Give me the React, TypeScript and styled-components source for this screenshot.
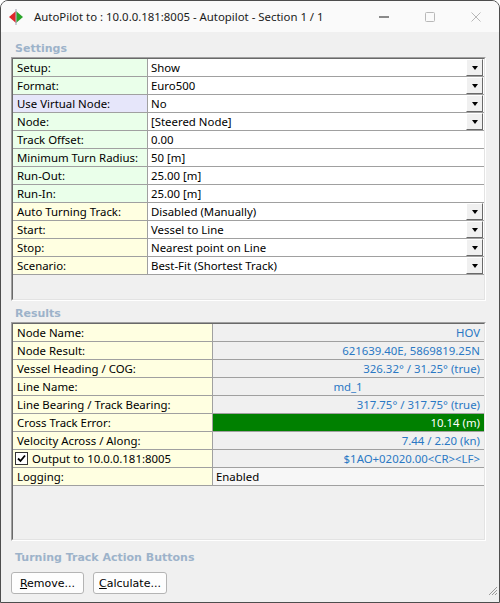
import React from 'react';
import styled, { createGlobalStyle } from 'styled-components';

const GlobalStyle = createGlobalStyle`
  html, body {
    margin: 0;
    padding: 0;
    background: #ffffff;
  }
  * {
    box-sizing: border-box;
  }
`;

const Window = styled.div`
  width: 500px;
  height: 603px;
  border: 1px solid #4d4d4d;
  border-radius: 8px 8px 0 0;
  background: #f0f0f0;
  display: flex;
  flex-direction: column;
  overflow: hidden;
  position: relative;
  font-family: "Noto Sans", "DejaVu Sans", sans-serif;
`;

const TitleBar = styled.div`
  height: 31px;
  background: #fafafa;
  display: flex;
  align-items: center;
  padding-left: 7px;
  flex-shrink: 0;
`;

const TitleText = styled.div`
  font-size: 11.4px;
  color: #1a1a1a;
  margin-left: 10px;
  flex: 1;
  white-space: nowrap;
`;

const WindowButtons = styled.div`
  display: flex;
  align-items: center;
  height: 100%;
`;

const WinButton = styled.div`
  width: 46px;
  height: 100%;
  display: flex;
  align-items: center;
  justify-content: center;
`;

const Body = styled.div`
  flex: 1;
  display: flex;
  flex-direction: column;
  padding: 0 13px 0 10px;
`;

const GroupLabel = styled.div<{ $top: number }>`
  font-family: "DejaVu Sans", "Noto Sans", sans-serif;
  font-weight: bold;
  font-size: 11px;
  color: #9db3ca;
  height: 17px;
  line-height: 17px;
  margin-top: ${p => p.$top}px;
  padding-left: 4px;
`;

const Grid = styled.div<{ $height: number }>`
  height: ${p => p.$height}px;
  border-style: solid;
  border-width: 1px;
  border-color: #a0a0a0 #ffffff #ffffff #a0a0a0;
  display: flex;
  flex-direction: column;
`;

const GridInner = styled.div`
  flex: 1;
  border-style: solid;
  border-width: 1px;
  border-color: #696969 #e3e3e3 #e3e3e3 #696969;
  background: #f0f0f0;
  display: flex;
  flex-direction: column;
`;

const Row = styled.div<{ $labelWidth: number }>`
  display: grid;
  grid-template-columns: ${p => p.$labelWidth}px 1fr;
  height: 18px;
  border-bottom: 1px solid #a0a0a0;
  font-size: 11.4px;
  color: #000;
`;

const LabelCell = styled.div<{ $bg: string }>`
  background: ${p => p.$bg};
  border-right: 1px solid #a0a0a0;
  display: flex;
  align-items: center;
  padding-left: 4px;
  white-space: nowrap;
  overflow: hidden;
`;

const ValueCell = styled.div<{ $bg?: string; $color?: string; $align?: string }>`
  background: ${p => p.$bg || '#ffffff'};
  color: ${p => p.$color || '#000000'};
  display: flex;
  align-items: center;
  justify-content: ${p => p.$align || 'flex-start'};
  padding: 0 4px 0 3px;
  white-space: nowrap;
  position: relative;
`;

const ValueText = styled.span`
  flex: 1;
`;

const DropButton = styled.div`
  width: 17px;
  height: 17px;
  margin-right: -3px;
  background: #f0f0f0;
  border-style: solid;
  border-width: 1px;
  border-color: #ffffff #696969 #696969 #ffffff;
  display: flex;
  align-items: center;
  justify-content: center;
  flex-shrink: 0;
`;

const Arrow = styled.div`
  width: 0;
  height: 0;
  border-left: 3.5px solid transparent;
  border-right: 3.5px solid transparent;
  border-top: 4px solid #000;
`;

const CheckBox = styled.div`
  width: 13px;
  height: 13px;
  border: 1px solid #333;
  background: #fff;
  margin-right: 4px;
  margin-left: -2px;
  display: flex;
  align-items: center;
  justify-content: center;
`;

const ButtonRow = styled.div`
  display: flex;
  gap: 9px;
  margin-top: 6px;
`;

const Button = styled.button`
  height: 22px;
  padding: 0;
  border: 1px solid #b4b4b4;
  border-radius: 3px;
  background: #fdfdfd;
  font-family: "DejaVu Sans", "Noto Sans", sans-serif;
  font-size: 11px;
  color: #000;
  u {
    text-decoration: underline;
  }
`;

const Grip = styled.div`
  position: absolute;
  right: 1px;
  bottom: 1px;
`;

const GREEN = '#eaffea';
const LAVENDER = '#e6e6fa';
const YELLOW = '#ffffe1';
const BLUE = '#2a78c4';

type Setting = { label: string; value: string; bg: string; drop?: boolean };

const settings: Setting[] = [
  { label: 'Setup:', value: 'Show', bg: GREEN, drop: true },
  { label: 'Format:', value: 'Euro500', bg: GREEN, drop: true },
  { label: 'Use Virtual Node:', value: 'No', bg: LAVENDER, drop: true },
  { label: 'Node:', value: '[Steered Node]', bg: GREEN, drop: true },
  { label: 'Track Offset:', value: '0.00', bg: GREEN },
  { label: 'Minimum Turn Radius:', value: '50 [m]', bg: GREEN },
  { label: 'Run-Out:', value: '25.00 [m]', bg: GREEN },
  { label: 'Run-In:', value: '25.00 [m]', bg: GREEN },
  { label: 'Auto Turning Track:', value: 'Disabled (Manually)', bg: YELLOW, drop: true },
  { label: 'Start:', value: 'Vessel to Line', bg: YELLOW, drop: true },
  { label: 'Stop:', value: 'Nearest point on Line', bg: YELLOW, drop: true },
  { label: 'Scenario:', value: 'Best-Fit (Shortest Track)', bg: YELLOW, drop: true },
];

type Result = { label: string; value: string; align?: string; bg?: string; color?: string; check?: boolean };

const results: Result[] = [
  { label: 'Node Name:', value: 'HOV' },
  { label: 'Node Result:', value: '621639.40E, 5869819.25N' },
  { label: 'Vessel Heading / COG:', value: '326.32° / 31.25° (true)' },
  { label: 'Line Name:', value: 'md_1', align: 'center' },
  { label: 'Line Bearing / Track Bearing:', value: '317.75° / 317.75° (true)' },
  { label: 'Cross Track Error:', value: '10.14 (m)', bg: '#008000', color: '#ffffff' },
  { label: 'Velocity Across / Along:', value: '7.44 / 2.20 (kn)' },
  { label: 'Output to 10.0.0.181:8005', value: '$1AO+02020.00<CR><LF>', check: true },
  { label: 'Logging:', value: 'Enabled', align: 'flex-start', bg: '#f7f7f7', color: '#000' },
];

const AppIcon = () => (
  <svg width="16" height="16" viewBox="0 0 16 16">
    <polygon points="1,8 8,2 8,14" fill="#e0262a" />
    <polygon points="15,8 8,2 8,14" fill="#2aa52a" />
    <line x1="8" y1="0" x2="8" y2="16" stroke="#b0b0c0" strokeWidth="1.2" />
  </svg>
);

const App: React.FC = () => {
  return (
    <>
      <GlobalStyle />
      <Window>
        <TitleBar>
          <AppIcon />
          <TitleText>AutoPilot to : 10.0.0.181:8005 - Autopilot - Section 1 / 1</TitleText>
          <WindowButtons>
            <WinButton>
              <svg width="10" height="10" viewBox="0 0 10 10">
                <line x1="0" y1="5" x2="10" y2="5" stroke="#1a1a1a" strokeWidth="1" />
              </svg>
            </WinButton>
            <WinButton>
              <svg width="10" height="10" viewBox="0 0 10 10">
                <rect x="0.5" y="0.5" width="9" height="9" rx="1" fill="none" stroke="#b8b8b8" strokeWidth="1" />
              </svg>
            </WinButton>
            <WinButton>
              <svg width="10" height="10" viewBox="0 0 10 10">
                <path d="M0.5 0.5 L9.5 9.5 M9.5 0.5 L0.5 9.5" stroke="#b8b8b8" strokeWidth="1" />
              </svg>
            </WinButton>
          </WindowButtons>
        </TitleBar>
        <Body>
          <GroupLabel $top={8}>Settings</GroupLabel>
          <Grid $height={244}>
            <GridInner>
              {settings.map(s => (
                <Row key={s.label} $labelWidth={135}>
                  <LabelCell $bg={s.bg}>{s.label}</LabelCell>
                  <ValueCell>
                    <ValueText>{s.value}</ValueText>
                    {s.drop && (
                      <DropButton>
                        <Arrow />
                      </DropButton>
                    )}
                  </ValueCell>
                </Row>
              ))}
            </GridInner>
          </Grid>
          <GroupLabel $top={4}>Results</GroupLabel>
          <Grid $height={219}>
            <GridInner>
              {results.map(r => (
                <Row key={r.label} $labelWidth={200}>
                  <LabelCell $bg={YELLOW}>
                    {r.check && (
                      <CheckBox>
                        <svg width="9" height="9" viewBox="0 0 9 9">
                          <path d="M1 4.5 L3.5 7 L8 1.5" fill="none" stroke="#000" strokeWidth="1.8" />
                        </svg>
                      </CheckBox>
                    )}
                    {r.label}
                  </LabelCell>
                  <ValueCell
                    $bg={r.bg || '#f0f0f0'}
                    $color={r.color || BLUE}
                    $align={r.align || 'flex-end'}
                  >
                    {r.value}
                  </ValueCell>
                </Row>
              ))}
            </GridInner>
          </Grid>
          <GroupLabel $top={8}>Turning Track Action Buttons</GroupLabel>
          <ButtonRow>
            <Button style={{ width: 73 }}>
              <u>R</u>emove...
            </Button>
            <Button style={{ width: 74 }}>
              <u>C</u>alculate...
            </Button>
          </ButtonRow>
        </Body>
        <Grip>
          <svg width="11" height="11" viewBox="0 0 11 11">
            <path d="M10 2 L2 10 M10 5 L5 10 M10 8 L8 10" stroke="#9a9a9a" strokeWidth="1" />
          </svg>
        </Grip>
      </Window>
    </>
  );
};

export default App;
